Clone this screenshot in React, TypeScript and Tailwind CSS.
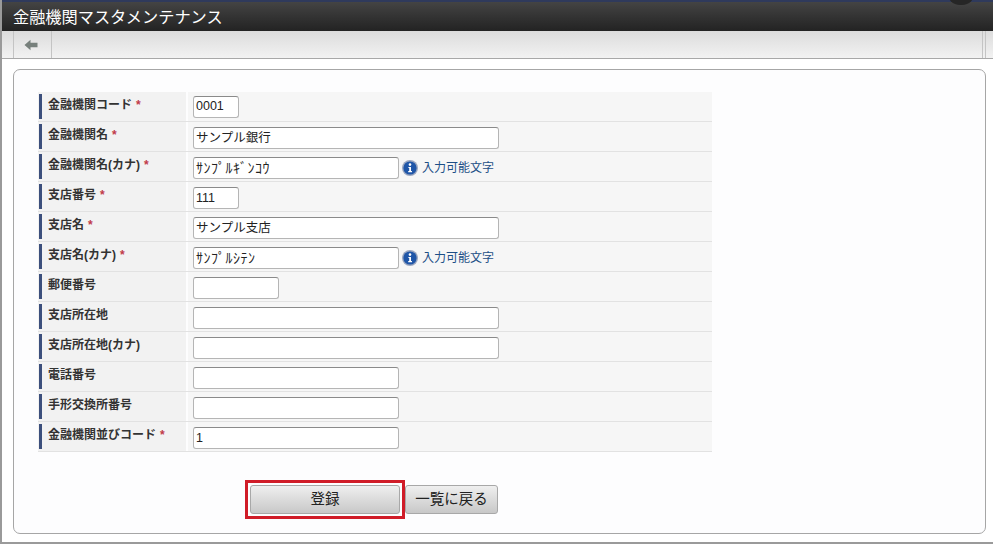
const jp = { fontFamily: '"Liberation Sans", "Noto Sans CJK JP", sans-serif' };

type Field = { label: string; required?: boolean; value?: string; width: string; hint?: boolean };

const fields: Field[] = [
  { label: '金融機関コード', required: true, value: '0001', width: 'w-[46px]' },
  { label: '金融機関名', required: true, value: 'サンプル銀行', width: 'w-[306px]' },
  { label: '金融機関名(カナ)', required: true, value: 'ｻﾝﾌﾟﾙｷﾞﾝｺｳ', width: 'w-[206px]', hint: true },
  { label: '支店番号', required: true, value: '111', width: 'w-[46px]' },
  { label: '支店名', required: true, value: 'サンプル支店', width: 'w-[306px]' },
  { label: '支店名(カナ)', required: true, value: 'ｻﾝﾌﾟﾙｼﾃﾝ', width: 'w-[206px]', hint: true },
  { label: '郵便番号', width: 'w-[86px]' },
  { label: '支店所在地', width: 'w-[306px]' },
  { label: '支店所在地(カナ)', width: 'w-[306px]' },
  { label: '電話番号', width: 'w-[206px]' },
  { label: '手形交換所番号', width: 'w-[206px]' },
  { label: '金融機関並びコード', required: true, value: '1', width: 'w-[206px]' },
];

function InfoIcon() {
  return (
    <svg width="16" height="16" viewBox="0 0 16 16" className="shrink-0">
      <circle cx="8" cy="8" r="8" fill="#9aa6bf" />
      <circle cx="8" cy="8" r="6.6" fill="#1f56a8" />
      <circle cx="8" cy="4.6" r="1.3" fill="#fff" />
      <path d="M6.4 6.9h2.6v4.2h1v1.1H6.2v-1.1h1V8H6.4z" fill="#fff" />
    </svg>
  );
}

function Row({ field }: { field: Field }) {
  return (
    <div className="flex h-[30px] border-b border-[#e2e2e2] [&:first-child>div:last-child]:pt-0">
      <div className="w-[148px] bg-[#f2f2f2] pl-px pt-[2px]">
        <div className="flex h-[25px] items-center border-l-[3px] border-[#3c4f7c] pl-[6px] pb-[3px] text-[12px] font-bold text-[#333]">
          {field.label}
          {field.required && <span className="ml-[4px] text-[#c0394a]">*</span>}
        </div>
      </div>
      <div className="ml-[2px] flex flex-1 items-center gap-[3px] bg-[#f6f6f6] pl-[5px] pt-[3px]">
        <div
          className={`${field.width} flex h-[22px] items-center rounded-[3px] border border-[#b5b5b5] border-t-[#8a8a8a] bg-white px-[2px] ${
            field.hint ? 'text-[14px] tracking-[0.5px]' : 'text-[12.5px]'
          } text-[#222]`}
        >
          {field.value}
        </div>
        {field.hint && (
          <div className="flex items-center gap-[4px] text-[12px] text-[#1d4f86]">
            <InfoIcon />
            入力可能文字
          </div>
        )}
      </div>
    </div>
  );
}

export default function App() {
  return (
    <div className="flex h-[544px] w-[993px] flex-col overflow-hidden border-b-2 border-l-2 border-[#9a9a9a] bg-white" style={jp}>
      <div className="relative flex h-[31px] items-center border-t-2 border-[#2f3a5c] bg-gradient-to-b from-[#444444] to-[#232323] pl-[11px] text-[16.2px] text-white">
        <span className="relative top-[1px]">金融機関マスタメンテナンス</span>
        <div className="absolute -top-[23px] right-[18px] h-[26px] w-[28px] rounded-full bg-[#262626]" />
      </div>
      <div className="flex h-[28px] border-b border-[#a8a8a8] bg-gradient-to-b from-[#dcdcdc] to-[#f2f2f2]">
        <div className="ml-[11px] flex w-[39px] items-center justify-center border-x border-[#c4c4c4]">
          <svg width="14" height="12" viewBox="0 0 14 12" className="-ml-[3px]">
            <path d="M0.5 6 L6.5 0.8 V3.8 H13.5 V8.2 H6.5 V11.2 Z" fill="#77807c" />
          </svg>
        </div>
        <div className="ml-auto mr-[7px] w-[4px] border-x border-[#c4c4c4]" />
      </div>
      <div className="ml-[11px] mr-[7px] mt-[10px] h-[465px] rounded-[7px] border border-[#a6a6a6] bg-[#fdfdfe] pl-[24px] pt-[22px]">
        <div className="w-[674px]">
          {fields.map((field) => (
            <Row key={field.label} field={field} />
          ))}
        </div>
        <div className="ml-[207px] mt-[28px] flex items-center">
          <div className="border-[3px] border-[#d01c28] p-[2px]">
            <button className="h-[29px] w-[150px] rounded-[3px] border border-[#a8a8a8] bg-gradient-to-b from-[#efefef] to-[#c8c8c8] pt-[1px] text-[14.5px] text-[#222]">
              登録
            </button>
          </div>
          <button className="h-[29px] w-[93px] rounded-[3px] border border-[#a8a8a8] bg-gradient-to-b from-[#efefef] to-[#c8c8c8] pt-[1px] text-[14.5px] text-[#222]">
            一覧に戻る
          </button>
        </div>
      </div>
    </div>
  );
}
